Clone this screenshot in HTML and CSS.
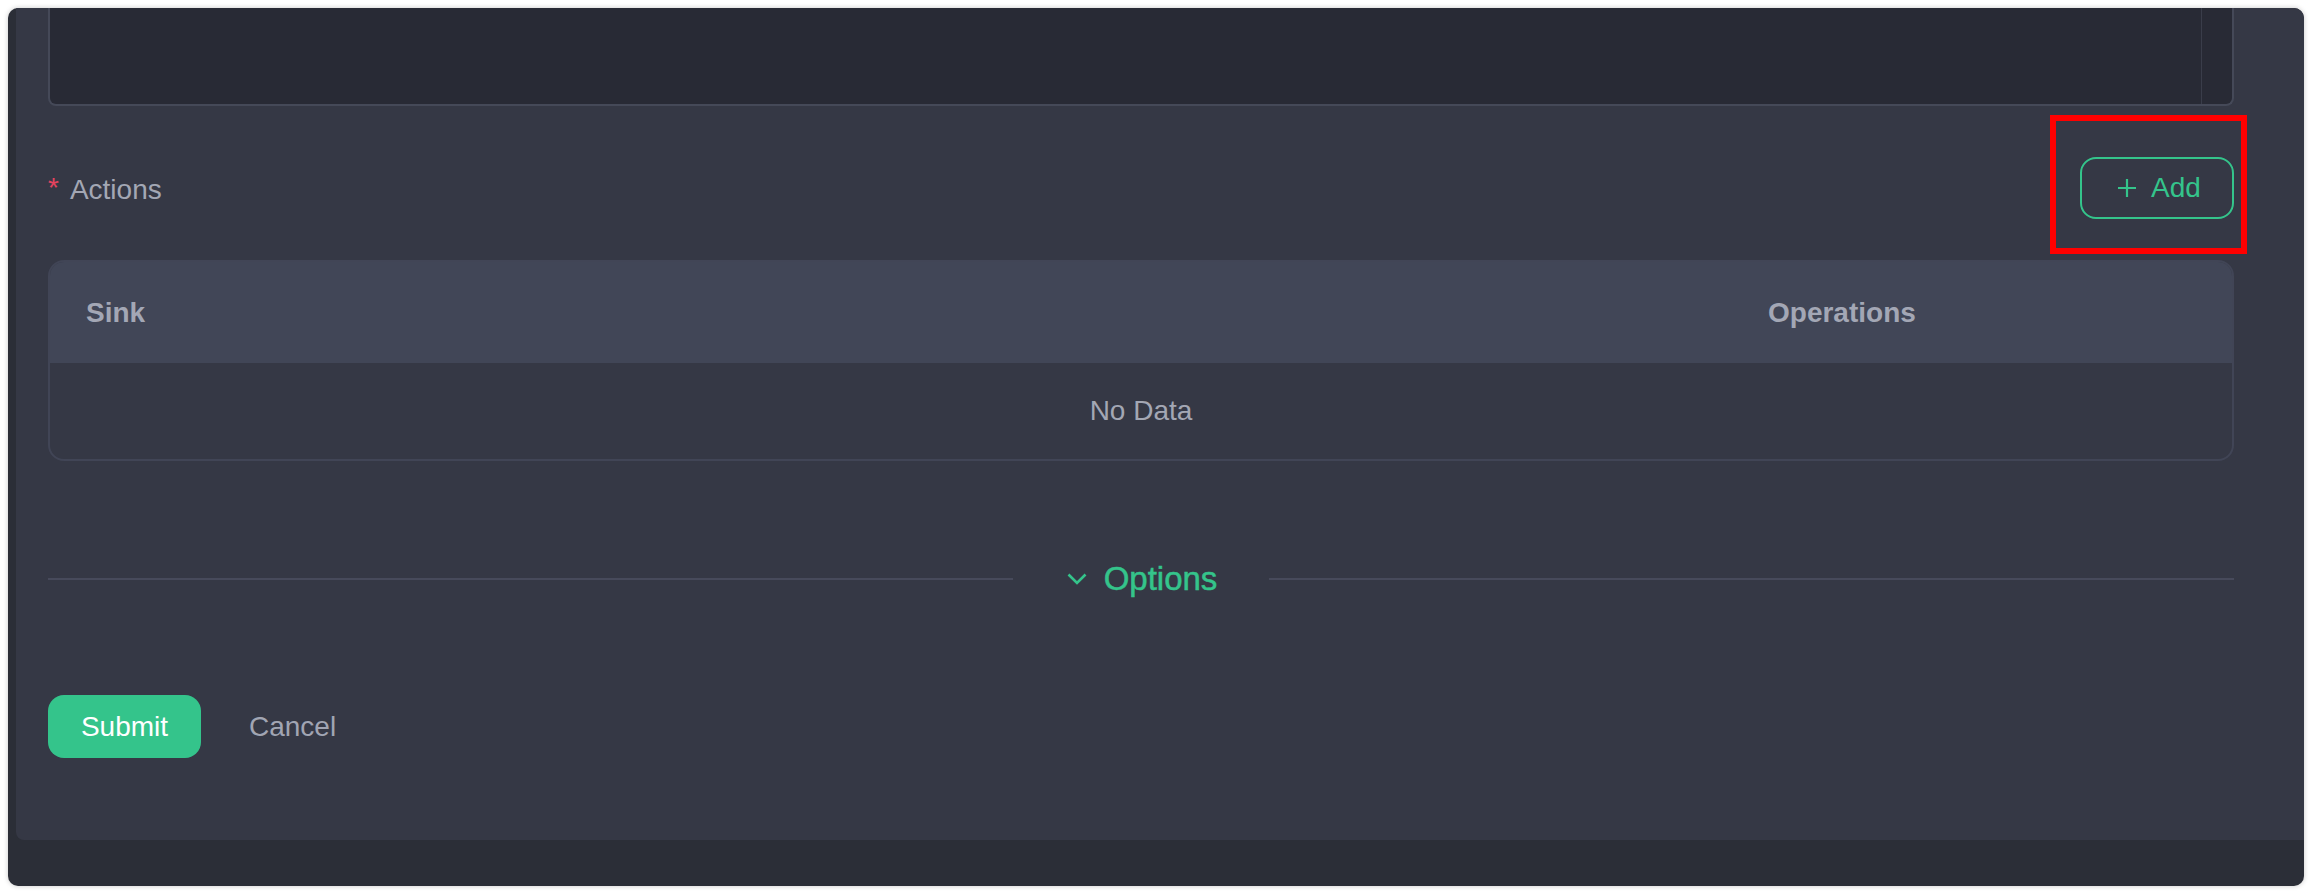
FILE: index.html
```html
<!DOCTYPE html>
<html lang="en">
<head>
<meta charset="utf-8">
<title>Actions</title>
<link rel="stylesheet" href="styles.css">
</head>
<body>
<div class="window">
  <div class="panel">
    <div class="textarea"><div class="track"></div></div>
    <div class="actions-row">
      <div class="label"><span class="req">*</span><span>Actions</span></div>
      <button class="btn-add">
        <svg class="plus" viewBox="0 0 20 20" width="20" height="20"><path d="M10 1v18M1 10h18" stroke="#34c48b" stroke-width="2.2" fill="none"/></svg>
        <span>Add</span>
      </button>
    </div>
    <div class="table">
      <div class="thead">
        <div class="th">Sink</div>
        <div class="th">Operations</div>
      </div>
      <div class="empty">No Data</div>
    </div>
    <div class="divider">
      <div class="line"></div>
      <div class="toggle">
        <svg class="chev" viewBox="0 0 20 12" width="20" height="12"><path d="M1.5 1.5l8.5 8.5 8.5-8.5" stroke="#34c48b" stroke-width="2.6" fill="none"/></svg>
        <span>Options</span>
      </div>
      <div class="line"></div>
    </div>
    <div class="footer">
      <button class="btn-submit">Submit</button>
      <button class="btn-cancel">Cancel</button>
    </div>
  </div>
</div>
<div class="highlight"></div>
</body>
</html>
```
FILE: styles.css
```css
html, body {
  margin: 0;
  padding: 0;
  background: #ffffff;
  font-family: "Liberation Sans", Arial, sans-serif;
}
.window {
  margin: 8px;
  width: 2296px;
  height: 878px;
  border-radius: 10px;
  background: #2b2e37;
  box-shadow: 0 0 5px rgba(0, 0, 0, 0.22);
  overflow: hidden;
  display: flex;
  align-items: flex-start;
}
.panel {
  margin-left: 8px;
  flex: 1;
  height: 832px;
  background: #353845;
  border-bottom-left-radius: 8px;
  padding: 0 70px 0 32px;
  box-sizing: border-box;
  display: flex;
  flex-direction: column;
}
.textarea {
  height: 98px;
  box-sizing: border-box;
  border: 2px solid #454958;
  border-top: none;
  border-radius: 0 0 8px 8px;
  background: #282a35;
  display: flex;
  justify-content: flex-end;
}
.track {
  width: 30px;
  border-left: 1px solid #3a3d4a;
}
.actions-row {
  margin-top: 51px;
  height: 62px;
  display: flex;
  align-items: center;
  justify-content: space-between;
}
.label {
  font-size: 28px;
  color: #a3a7b4;
  display: flex;
  align-items: center;
  gap: 11px;
  padding-top: 4px;
}
.req {
  color: #e5435f;
  font-size: 28px;
  position: relative;
  top: -2px;
}
.btn-add {
  width: 154px;
  height: 62px;
  box-sizing: border-box;
  border: 2px solid #34c48b;
  border-radius: 16px;
  background: transparent;
  color: #34c48b;
  font-family: "Liberation Sans", Arial, sans-serif;
  font-size: 28px;
  display: flex;
  align-items: center;
  justify-content: center;
  gap: 14px;
  padding: 0 0 0 4px;
}
.table {
  margin-top: 41px;
  border: 2px solid #414556;
  border-radius: 16px;
  overflow: hidden;
}
.thead {
  height: 101px;
  background: #414657;
  display: grid;
  grid-template-columns: 1682px 1fr;
  align-items: center;
}
.th {
  padding-left: 36px;
  font-size: 28px;
  font-weight: bold;
  color: #a3a7b5;
}
.empty {
  height: 96px;
  display: flex;
  align-items: center;
  justify-content: center;
  font-size: 28px;
  color: #a3a7b4;
}
.divider {
  margin-top: 98px;
  height: 40px;
  display: flex;
  align-items: center;
}
.line {
  flex: 1;
  height: 2px;
  background: #474a5b;
}
.toggle {
  padding: 0 52px 0 54px;
  display: flex;
  align-items: center;
  gap: 17px;
  color: #34c48b;
  font-size: 33px;
  -webkit-text-stroke: 0.5px #34c48b;
}
.footer {
  margin-top: 96px;
  display: flex;
  align-items: center;
  gap: 48px;
}
.btn-submit {
  width: 153px;
  height: 63px;
  border: none;
  border-radius: 16px;
  background: #34c48b;
  color: #ffffff;
  font-family: "Liberation Sans", Arial, sans-serif;
  font-size: 28px;
  padding: 0;
}
.btn-cancel {
  border: none;
  background: transparent;
  color: #a1a5b3;
  font-family: "Liberation Sans", Arial, sans-serif;
  font-size: 28px;
  padding: 0;
}
.highlight {
  position: absolute;
  left: 2050px;
  top: 115px;
  width: 197px;
  height: 139px;
  box-sizing: border-box;
  border: 6px solid #ff0000;
}
```
